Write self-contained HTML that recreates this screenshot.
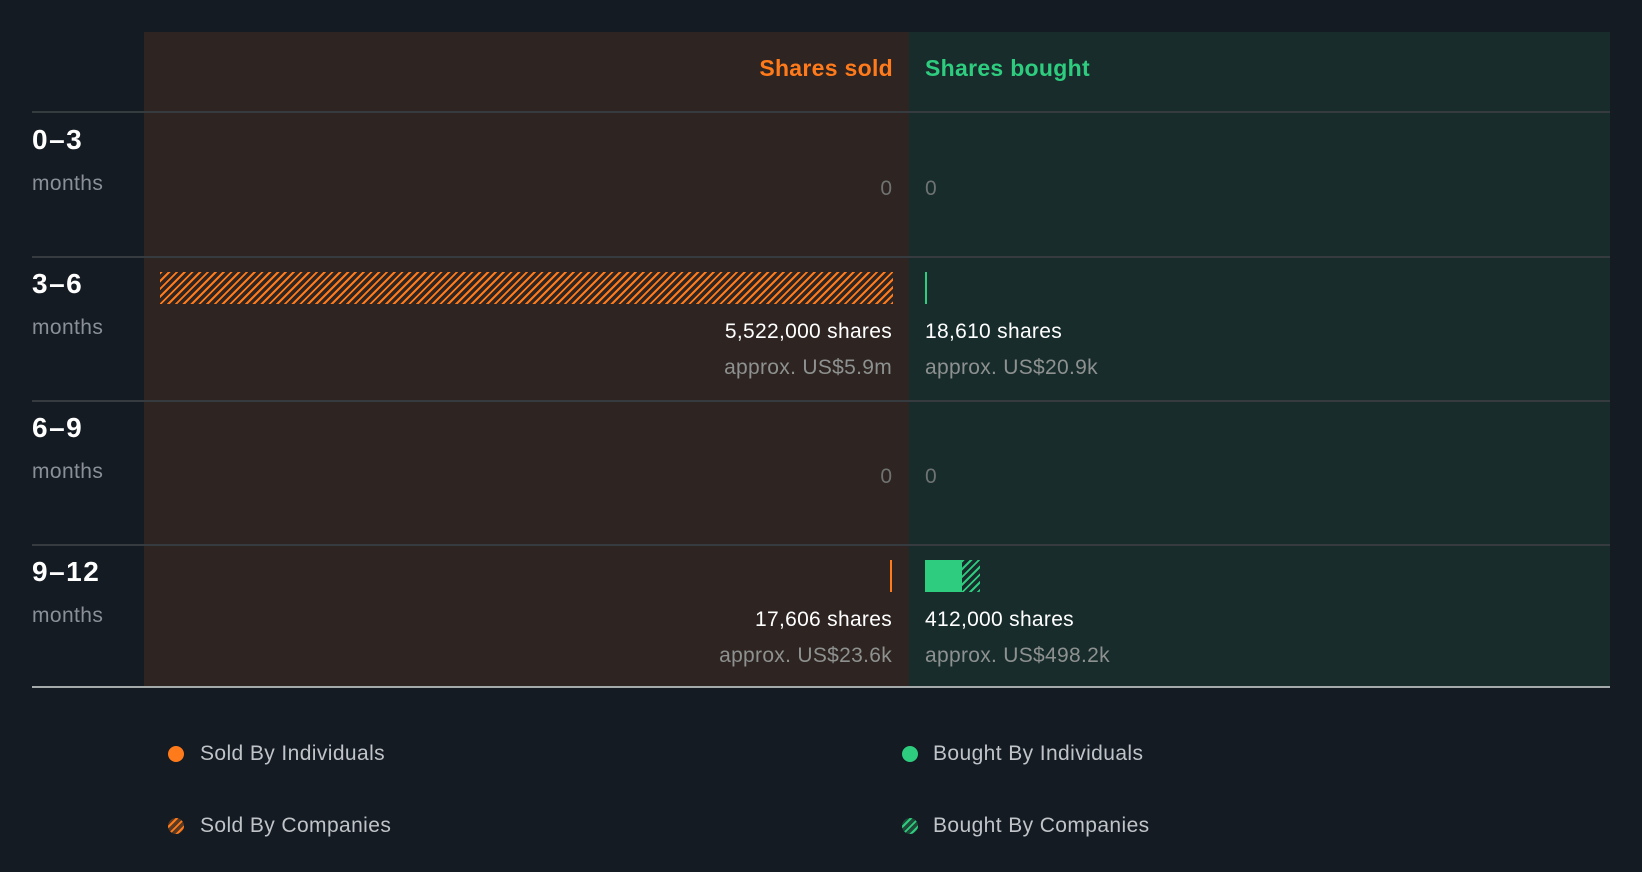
<!DOCTYPE html>
<html><head><meta charset="utf-8"><style>
*{margin:0;padding:0;box-sizing:border-box}
body{width:1642px;height:872px;background:#141b23;position:relative;overflow:hidden;font-family:"Liberation Sans",sans-serif}
.a{position:absolute;white-space:nowrap}
.sold{left:144px;top:32px;width:765px;height:655px;background:#2e2422}
.bought{left:909px;top:32px;width:701px;height:655px;background:#182c2c}
.line{left:32px;width:1578px;height:2px;background:#363b3f}
.h{font-size:23px;font-weight:bold;top:55px;letter-spacing:0.3px}
.lab{left:32px;color:#fff;font-weight:bold;font-size:28px;letter-spacing:1.5px}
.mo{left:32px;color:#8a9096;font-size:21px;letter-spacing:0.4px}
.z{color:#6e7372;font-size:21px}
.r{right:750px;text-align:right}
.l{left:925px}
.s{color:#fff;font-size:21px;letter-spacing:0.3px}
.ap{color:#8d918f;font-size:21px;letter-spacing:0.3px}
.hatchO{background:repeating-linear-gradient(135deg,#ff7a1a 0 2px,transparent 2px 5.5px)}
.hatchG{background:repeating-linear-gradient(135deg,#2ecc7e 0 2px,transparent 2px 5.5px)}
.leg{font-size:21px;color:#c0c4c8;letter-spacing:0.4px}
.dot{width:16px;height:16px;border-radius:50%}
</style></head><body>
<div class="a sold"></div><div class="a bought"></div>
<div class="a h" style="right:749px;color:#ff7a1a">Shares sold</div>
<div class="a h" style="left:925px;color:#2ecc7e">Shares bought</div>
<div class="a line" style="top:111px"></div>
<div class="a line" style="top:256px"></div>
<div class="a line" style="top:400px"></div>
<div class="a line" style="top:544px"></div>
<div class="a line" style="top:686px;background:#a3aaa9"></div>

<div class="a lab" style="top:124px">0–3</div><div class="a mo" style="top:172px">months</div>
<div class="a lab" style="top:268px">3–6</div><div class="a mo" style="top:316px">months</div>
<div class="a lab" style="top:412px">6–9</div><div class="a mo" style="top:460px">months</div>
<div class="a lab" style="top:556px">9–12</div><div class="a mo" style="top:604px">months</div>

<div class="a z r" style="top:177px">0</div><div class="a z l" style="top:177px">0</div>
<div class="a z r" style="top:465px">0</div><div class="a z l" style="top:465px">0</div>

<div class="a hatchO" style="left:160px;top:272px;width:733px;height:32px"></div>
<div class="a" style="left:925px;top:272px;width:2px;height:32px;background:#2ecc7e"></div>
<div class="a s r" style="top:320px">5,522,000 shares</div>
<div class="a ap r" style="top:356px">approx. US$5.9m</div>
<div class="a s l" style="top:320px">18,610 shares</div>
<div class="a ap l" style="top:356px">approx. US$20.9k</div>

<div class="a" style="left:890px;top:560px;width:2px;height:32px;background:#ff7a1a"></div>
<div class="a" style="left:925px;top:560px;width:37px;height:32px;background:#2ecc7e"></div>
<div class="a hatchG" style="left:962px;top:560px;width:18px;height:32px"></div>
<div class="a s r" style="top:608px">17,606 shares</div>
<div class="a ap r" style="top:644px">approx. US$23.6k</div>
<div class="a s l" style="top:608px">412,000 shares</div>
<div class="a ap l" style="top:644px">approx. US$498.2k</div>

<div class="a dot" style="left:168px;top:746px;background:#ff7a1a"></div>
<div class="a leg" style="left:200px;top:742px">Sold By Individuals</div>
<div class="a dot hatchO" style="left:168px;top:818px;background-color:#5a3a22"></div>
<div class="a leg" style="left:200px;top:814px">Sold By Companies</div>
<div class="a dot" style="left:902px;top:746px;background:#2ecc7e"></div>
<div class="a leg" style="left:933px;top:742px">Bought By Individuals</div>
<div class="a dot hatchG" style="left:902px;top:818px;background-color:#1f4a3a"></div>
<div class="a leg" style="left:933px;top:814px">Bought By Companies</div>
</body></html>
